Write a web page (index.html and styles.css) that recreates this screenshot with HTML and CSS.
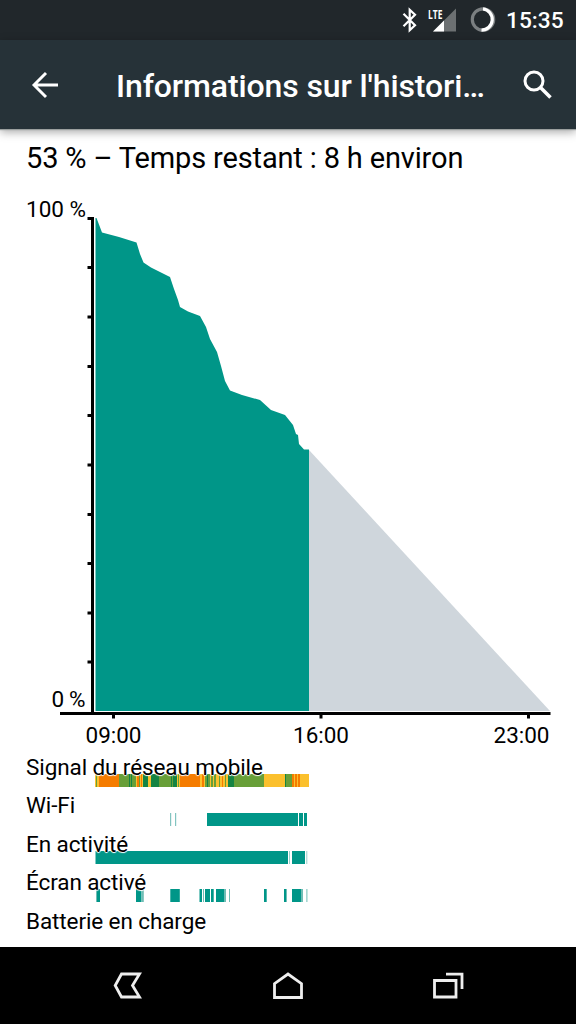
FILE: index.html
```html
<!DOCTYPE html>
<html lang="fr">
<head>
<meta charset="utf-8">
<title>Informations sur l'historique</title>
<link rel="stylesheet" href="styles.css">
</head>
<body>
<div class="screen">
  <div class="status">
    <svg class="bt" width="16" height="26" viewBox="0 0 16 26"><path d="M1.500 6.800 13 18.200 7.700 23.200V2.800L13 7.800 1.500 19.200" fill="none" stroke="#fff" stroke-width="2.200"/></svg>
    <svg class="signal" width="30" height="34" viewBox="0 -4 30 34">
      <path d="M28 1.500V24.500H5Z" fill="#6c7072"/><path d="M16 13.500V24.500H5Z" fill="#fff"/>
      <text x="0" y="11.500" textLength="14.500" lengthAdjust="spacingAndGlyphs" class="lte">LTE</text>
    </svg>
    <svg class="ring" width="26" height="26" viewBox="0 0 26 26"><circle cx="13" cy="12.500" r="10.700" fill="none" stroke="#7b7f81" stroke-width="3.200"/><path d="M13 1.800A10.700 10.700 0 0 1 11.500 23.100" fill="none" stroke="#fff" stroke-width="3.200"/></svg>
    <span class="clock">15:35</span>
  </div>
  <header class="bar">
    <svg class="back" width="28" height="28" viewBox="0 0 28 28"><path d="M15 2 3 14 15 26M3.500 14H27" fill="none" stroke="#fff" stroke-width="2.900"/></svg>
    <h1 class="title">Informations sur l'histori…</h1>
    <svg class="search" width="30" height="30" viewBox="0 0 30 30"><circle cx="11" cy="11" r="9" fill="none" stroke="#fff" stroke-width="3"/><path d="M17 17 27.500 27.500" stroke="#fff" stroke-width="3.600"/></svg>
  </header>
  <main class="content">
    <p class="summary">53 % – Temps restant : 8 h environ</p>
    <svg class="chart" width="576" height="570" viewBox="0 184 576 570">
      <path d="M309 450 550 711H309Z" fill="#cfd6dc"/>
      <path d="M95.500 711V218H96.500L102 232.500 119 237 136.500 242.500 140 254 143.500 262.500 151 267.500 170 277 174 289 178 300 180 307 188 311.500 200 316 206 327 210 339 217 352 221 366 225 381 230 390.500 242 395 260 400 271 410 285 415 293 425 296 434 298 435 299 444 304 449.500H309V711Z" fill="#009688"/>
      <path d="M92.500 217V713M87.500 218.500H93M87.500 267.500H93M87.500 317H93M87.500 366.500H93M87.500 415.500H93M87.500 465H93M87.500 514.500H93M87.500 563.500H93M87.500 613H93M87.500 662H93M60 713.500H550.500M113.500 713V718.500M321 713V718.500M528.500 713V718.500" fill="none" stroke="#000" stroke-width="3"/>
      <g class="tick">
        <text x="26" y="217" textLength="60">100 %</text>
        <text x="51.500" y="707" textLength="34">0 %</text>
        <text x="85.500" y="743" textLength="56">09:00</text>
        <text x="293" y="743" textLength="56">16:00</text>
        <text x="493.500" y="743" textLength="56">23:00</text>
      </g>
    </svg>
    <section class="rows">
      <div class="row"><svg class="strip" width="214" height="13" viewBox="95 0 214 13" shape-rendering="crispEdges">
        <path fill="#fbc02d" d="M95 0H309V13H95Z"/>
        <path fill="#689f38" d="M96 0h1v13h-1zM119 0h17v13h-17zM139 0h1v13h-1zM159 0h14v13h-14zM178 0h1v13h-1zM205 0h2v13h-2zM208 0h2v13h-2zM211 0h2v13h-2zM214 0h2v13h-2zM219 0h1v13h-1zM225 0h1v13h-1zM234 0h30v13h-30zM285 0h7v13h-7z"/>
        <path fill="#f57c00" d="M99 0h20v13h-20zM137 0h2v13h-2zM141 0h1v13h-1zM180 0h20v13h-20zM202 0h2v13h-2zM222 0h1v13h-1zM292 0h2v13h-2zM295 0h2v13h-2zM298 0h2v13h-2z"/>
        <path fill="#158443" d="M129 0h1v13h-1zM131 0h1v13h-1zM143 0h5v13h-5zM151 0h8v13h-8zM171 0h1v13h-1zM173 0h4v13h-4zM207 0h1v13h-1zM228 0h6v13h-6zM285 0h1v13h-1z"/>
      </svg><span class="label">Signal du réseau mobile</span></div>
      <div class="row"><svg class="strip" width="214" height="13" viewBox="95 0 214 13"><path fill="#009688" d="M207 0h91v13h-91zM299 0h4v13h-4zM304 0h3v13h-3z"/><path fill="#83c4c0" d="M170 0h1.200v13h-1.200zM175 0h1.200v13h-1.200z"/></svg><span class="label">Wi-Fi</span></div>
      <div class="row"><svg class="strip" width="214" height="13" viewBox="95 0 214 13"><path fill="#009688" d="M95.500 0H288V13H95.500zM292 0h13v13h-13z"/><path fill="#99cfca" d="M289 0h1v13h-1zM306.300 0h1v13h-1z"/></svg><span class="label">En activité</span></div>
      <div class="row"><svg class="strip" width="214" height="13" viewBox="95 0 214 13"><path fill="#009688" d="M97 0h3v13h-3zM136 0h5.500v13h-5.500zM170.300 0h9.500v13h-9.500zM199.500 0h2.500v13h-2.500zM205 0h5v13h-5zM211 0h2.700v13h-2.700zM216 0h8v13h-8zM264 0h2.700v13h-2.700zM284 0h2v13h-2zM292 0h9v13h-9z"/><path fill="#70bdb5" d="M96 0h1v13h-1zM141.500 0h2.300v13h-2.300zM203 0h1v13h-1zM224 0h2v13h-2zM229 0h1v13h-1zM286 0h1v13h-1zM301 0h2v13h-2zM306.400 0h1v13h-1z"/></svg><span class="label">Écran activé</span></div>
      <div class="row"><span class="label">Batterie en charge</span></div>
    </section>
  </main>
  <nav class="nav">
    <svg width="32" height="32" viewBox="0 0 32 32"><path d="M9.500 5H27.500L20.500 16.500 27.500 28H9.500L3.200 16.500Z" fill="none" stroke="#eee" stroke-width="2.800"/></svg>
    <svg width="32" height="32" viewBox="0 0 32 32"><path d="M2.500 28.500V14.700L16 5 29.500 14.700V28.500Z" fill="none" stroke="#eee" stroke-width="2.800"/></svg>
    <svg width="32" height="32" viewBox="0 0 32 32"><path d="M2.500 11.500H24V28H2.500ZM14 5.200H30V20" fill="none" stroke="#eee" stroke-width="2.800"/></svg>
  </nav>
</div>
</body>
</html>
```
FILE: styles.css
```css
body { margin: 0; }
.screen { width: 576px; height: 1024px; display: flex; flex-direction: column; background: #fff; color: #000; font-family: Roboto, "Liberation Sans", sans-serif; overflow: hidden; }
.status { height: 40px; box-sizing: border-box; background: #21272b; display: flex; align-items: center; justify-content: flex-end; padding-right: 14px; color: #fff; }
.signal { margin-left: 10px; overflow: visible; }
.lte { font: bold 13px "Open Sans", sans-serif; fill: #fff; }
.ring { margin-left: 12px; }
.clock { margin-left: 10px; width: 56px; font-size: 22.700px; font-weight: 500; line-height: 38px; white-space: nowrap; padding-top: 2px; }
.bar { height: 89px; flex: none; background: #263238; display: flex; align-items: center; padding: 0 23px 0 31px; box-shadow: 0 1px 1px #9ba09f, 0 3px 9px rgba(0,0,0,.35); color: #fff; z-index: 1; }
.back, .search, .strip, .chart { display: block; flex: none; }
.title { margin: 0 0 0 57px; flex: 1; font-size: 32px; font-weight: 500; letter-spacing: -.12px; line-height: 40px; white-space: nowrap; padding-top: 3px; }
.content { flex: 1; min-height: 0; }
.summary { margin: 0; height: 55px; padding-left: 26px; font-size: 29px; letter-spacing: -.15px; line-height: 58px; white-space: nowrap; }
.tick { font-size: 22.500px; }
.rows { padding: 0 0 0 26px; }
.row { display: grid; height: 38.400px; }
.row > * { grid-area: 1 / 1; }
.strip { margin: 20.300px 0 0 69px; }
.label { font-size: 22.500px; letter-spacing: -.1px; line-height: 27.400px; white-space: nowrap; text-shadow: 0 0 1px #fff, 1px 0 1px #fff, -1px 0 1px #fff, 0 1px 1px #fff; }
.nav { height: 77px; flex: none; box-sizing: border-box; padding-bottom: 2px; background: #000; display: flex; justify-content: center; align-items: center; gap: 128px; }
```
